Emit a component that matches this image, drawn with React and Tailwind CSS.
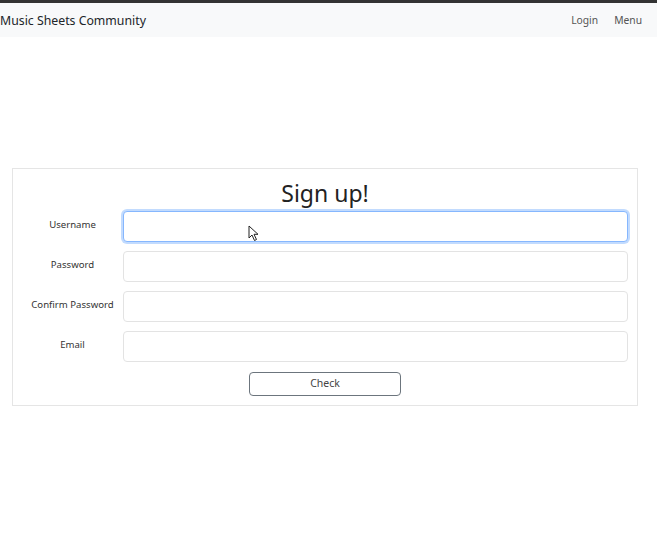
import React from 'react';

const fields = [
  { label: 'Username', type: 'text', focused: true },
  { label: 'Password', type: 'password' },
  { label: 'Confirm Password', type: 'password' },
  { label: 'Email', type: 'email' },
];

function Cursor() {
  return (
    <svg width="11" height="17" viewBox="0 0 11 17" className="absolute left-[125px] top-[14px] pointer-events-none">
      <path d="M1 1 L1 13 L4 10 L6.5 15.5 L8.5 14.5 L6 9.3 L10 9.3 Z" fill="#fff" stroke="#222" strokeWidth="1" strokeLinejoin="round" />
    </svg>
  );
}

export default function App() {
  return (
    <div className="min-h-[552px] w-[657px] bg-white text-[#212529]" style={{ fontFamily: '"Noto Sans", "Open Sans", sans-serif' }}>
      <div className="h-[3px] bg-[#333]" />
      <nav className="h-[34px] bg-[#f8f9fa] flex items-center justify-between">
        <span className="text-[12.3px] pt-[2px]">Music Sheets Community</span>
        <div className="flex items-center gap-[16px] pr-[15px] pt-[2px] text-[10.3px] text-[#555]">
          <a>Login</a>
          <a>Menu</a>
        </div>
      </nav>

      <div className="mt-[131px] ml-[12px] w-[626px] border border-[#e5e5e5] px-[9px] pb-[9px] pt-[7px]">
        <h1 className="text-center text-[23px] leading-[34px] text-[#222]">Sign up!</h1>
        <div className="flex flex-col gap-[9px] mt-[1px]">
          {fields.map(f => (
            <div key={f.label} className="flex items-center">
              <label className="w-[101px] text-center text-[9.6px] text-[#333] pb-[3px]">{f.label}</label>
              <div className="relative flex-1">
                <input
                  type={f.type}
                  className={`block w-full h-[31px] rounded-[4px] bg-white px-2 text-[12px] outline-none border
                    ${f.focused ? 'border-[#86b7fe] shadow-[0_0_0_2px_rgba(13,110,253,0.25)]' : 'border-[#e3e3e3]'}`}
                />
                {f.focused && <Cursor />}
              </div>
            </div>
          ))}
        </div>
        <div className="flex justify-center mt-[10px]">
          <button className="w-[152px] h-[24px] rounded-[4px] border border-[#6c757d] bg-white text-[10.5px] text-[#444]">
            Check
          </button>
        </div>
      </div>
    </div>
  );
}
